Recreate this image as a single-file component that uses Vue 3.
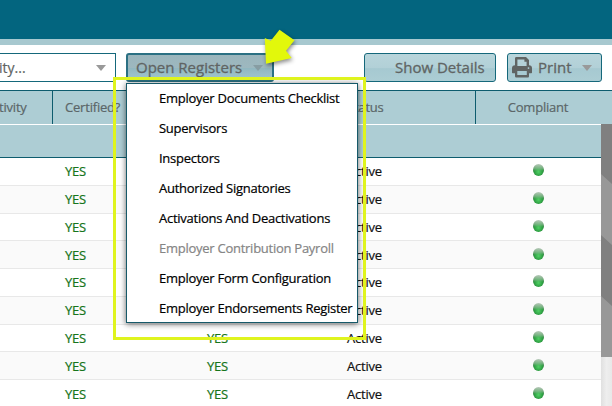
<script setup>
import { ref } from 'vue'

const rows = ref(Array.from({ length: 9 }, () => ({ certified: 'YES', active: 'YES', status: 'Active' })))
const registers = [
  { label: 'Employer Documents Checklist' },
  { label: 'Supervisors' },
  { label: 'Inspectors' },
  { label: 'Authorized Signatories' },
  { label: 'Activations And Deactivations' },
  { label: 'Employer Contribution Payroll', disabled: true },
  { label: 'Employer Form Configuration' },
  { label: 'Employer Endorsements Register' },
]
</script>

<template>
  <main class="page">
    <header class="banner"></header>
    <nav class="toolbar">
      <div class="select">
        <span>ity...</span>
        <i class="caret"></i>
      </div>
      <button class="btn open">
        <span>Open Registers</span>
        <i class="caret"></i>
      </button>
      <button class="btn details"><span>Show Details</span></button>
      <button class="btn print">
        <svg class="printer" width="20" height="21" viewBox="0 0 20 21">
          <path fill="#606463" fill-rule="evenodd" d="M4.5 0H14L17 3V8.2Q20 8.5 20 11V15.5Q20 16.3 19.3 16.3H17V19.3Q17 20.5 16 20.5H4.2Q3 20.5 3 19.3V16.3H.7Q0 16.3 0 15.5V11Q0 8.5 3 8.2V1.2Q3 0 4.5 0ZM5.4 2.5V9H14.6V4.7H12.4V2.5ZM5.3 14V18H14.8V14ZM16.5 10.2A.9 .9 0 1 0 16.5 12A.9 .9 0 1 0 16.5 10.2Z" />
        </svg>
        <span>Print</span>
        <i class="caret"></i>
      </button>
    </nav>

    <section class="table">
      <div class="grid head">
        <span class="first">tivity</span>
        <span>Certified?</span>
        <span></span>
        <span>Status</span>
        <span class="center">Compliant</span>
      </div>
      <div class="body">
        <div class="list">
          <div class="filter"></div>
          <div class="rows">
            <div v-for="(row, i) in rows" :key="i" class="grid row">
              <span></span>
              <span class="yes">{{ row.certified }}</span>
              <span class="yes">{{ row.active }}</span>
              <span>{{ row.status }}</span>
              <span class="center"><i class="led"></i></span>
            </div>
          </div>
        </div>
        <div class="scroll">
          <svg class="thumb" width="11" height="233" viewBox="0 0 11 233">
            <path fill="#808080" d="M0 0H11V233H0Z" />
            <path fill="#989898" d="M0 50L11 60V121L0 111ZM0 172L11 182V233H0Z" />
          </svg>
        </div>
      </div>
    </section>

    <ul class="menu">
      <li v-for="item in registers" :key="item.label" :class="{ disabled: item.disabled }">{{ item.label }}</li>
    </ul>
    <div class="highlight"></div>
    <svg class="arrow" width="40" height="42" viewBox="0 0 40 42">
      <path fill="#e2f80b" d="M17.5 4.7L32.5 15.2L24 25.8L29.7 33L4 38.8L2.8 13L8.8 15.8Z" />
    </svg>
  </main>
</template>

<style>
body {
  margin: 0;
  background: #fff;
}
</style>

<style scoped>
.page {
  position: relative;
  width: 612px;
  height: 406px;
  overflow: hidden;
  background: #fff;
  font-family: 'Open Sans', 'Noto Sans', sans-serif;
  font-size: 13px;
  color: #111;
  -webkit-text-stroke: 0.2px currentColor;
}
.banner {
  height: 39px;
  background: #03657f;
  border-bottom: 6px solid #a7c8cf;
}
.toolbar {
  display: flex;
  height: 45px;
  box-sizing: border-box;
  padding: 8px 0;
}
.select,
.btn {
  display: flex;
  align-items: center;
  box-sizing: border-box;
  height: 29px;
  border: 1px solid #15687b;
  color: #606463;
  font-family: inherit;
}
.select {
  width: 116px;
  border-left: 0;
  justify-content: space-between;
  padding: 0 9px 0 0;
  font-size: 14px;
}
.select span {
  margin-left: -1px;
}
.btn {
  padding: 0;
  border-radius: 3px;
  background: linear-gradient(#b9d5db 0, #b2d0d7 52%, #a6c9d1 54%, #accdd4 100%);
  font-size: 15px;
  white-space: nowrap;
  -webkit-text-stroke: 0.3px currentColor;
}
.btn span {
  padding-bottom: 1px;
}
.caret {
  width: 0;
  height: 0;
  border: 5px solid transparent;
  border-top: 6px solid #999;
  border-bottom: 0;
}
.open {
  width: 148px;
  margin-left: 10px;
  padding: 0 9px 0 8px;
  justify-content: space-between;
  border-width: 2px;
  border-color: #2b7083;
  background: linear-gradient(#9bb5bc 0, #9db8bf 50%, #91b7c0 54%, #a3c7cf 100%);
}
.open .caret {
  border-top-color: #879da3;
}
.details {
  width: 132px;
  margin-left: 90px;
  padding-left: 30px;
}
.print {
  width: 95px;
  margin-left: 11px;
  padding-left: 4px;
}
.print span {
  margin-left: 6px;
}
.print .caret {
  margin-left: 10px;
}
.grid {
  display: grid;
  grid-template-columns: 52px 142px 140px 141px 1fr;
  letter-spacing: -0.2px;
}
.head {
  height: 33px;
  border-top: 1px solid #0d5c6e;
  border-bottom: 1px solid #fff;
  background: #adcdd4;
  color: #5b6668;
}
.head > span {
  display: flex;
  align-items: center;
  padding: 0 0 1px 12px;
  border-left: 1px solid #0d5c6e;
}
.head > .first {
  padding-left: 0;
  border-left: 0;
  text-indent: -1px;
}
.head > .center {
  padding: 0 12px 1px 0;
}
.center {
  justify-content: center;
}
.body {
  display: flex;
  height: 281px;
}
.list {
  width: 601px;
}
.filter {
  height: 32px;
  background: #adcdd4;
  border-bottom: 1px solid #0d5c6e;
}
.row {
  height: 27.77px;
  box-sizing: border-box;
  border-bottom: 1px solid #e8e8e8;
}
.row:nth-child(even) {
  background: #fafafa;
}
.row > span {
  display: flex;
  align-items: center;
  padding-left: 13px;
}
.row > .center {
  padding: 0 0 2px 0;
}
.row .yes {
  color: #17751b;
}
.led {
  width: 11px;
  height: 12px;
  border-radius: 50%;
  background:
    linear-gradient(#d0dbd1dd 0, #9cc4a2aa 35%, transparent 58%),
    radial-gradient(circle at 50% 65%, #4fd064 0, #2f9f43 42%, #246a30 75%);
}
.scroll {
  width: 11px;
  margin-top: -1px;
  background: linear-gradient(90deg, #e0e0e0, #eeeeee 50%, #e8e8e8);
}
.thumb {
  display: block;
}
.menu {
  position: absolute;
  left: 126px;
  top: 83px;
  width: 232px;
  height: 240px;
  box-sizing: border-box;
  margin: 0;
  padding: 0;
  border: 1px solid #165969;
  background: #fff;
  box-shadow: 0 1px 6px #0009;
  list-style: none;
  color: #000;
  letter-spacing: -0.26px;
}
.menu li {
  height: 30px;
  padding-left: 32px;
  line-height: 29px;
  white-space: nowrap;
}
.menu .disabled {
  color: #858585;
}
.highlight {
  position: absolute;
  left: 113px;
  top: 77px;
  width: 253px;
  height: 263px;
  box-sizing: border-box;
  border: 3px solid #dff41e;
}
.arrow {
  position: absolute;
  left: 262px;
  top: 25px;
  filter: drop-shadow(1px 2px 2px #0007);
}
</style>
